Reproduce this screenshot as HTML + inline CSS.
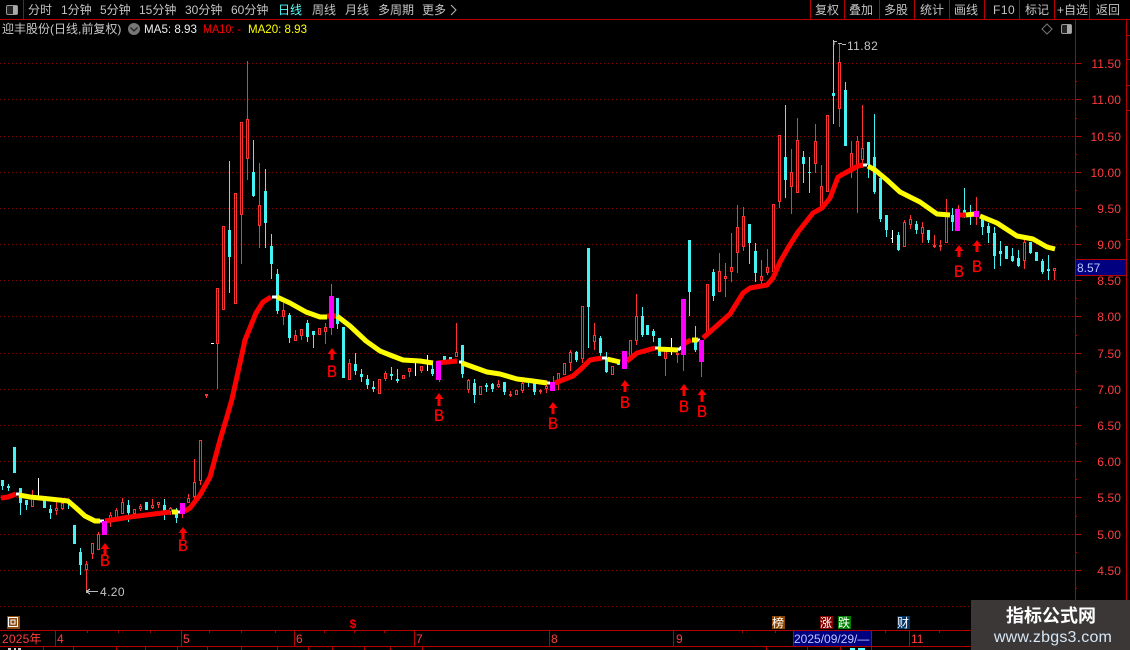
<!DOCTYPE html>
<html><head><meta charset="utf-8"><style>
html,body{margin:0;padding:0;background:#000;width:1130px;height:650px;overflow:hidden}
svg{display:block}
text{font-family:"Liberation Sans","WenQuanYi Zen Hei","Noto Sans CJK SC",sans-serif;font-size:12px}
.n{fill:#c4c4c4}
.p{fill:#ff3c3c;text-anchor:end;letter-spacing:.1px}
.t{fill:#ff3c3c}
.b{fill:#f00;font-size:17px;stroke:#f00;stroke-width:.35px}
</style></head><body>
<svg width="1130" height="650" viewBox="0 0 1130 650" xmlns="http://www.w3.org/2000/svg">
<rect width="1130" height="650" fill="#000"/>
<!-- grid -->
<g stroke="#8a0000" stroke-dasharray="1 3" shape-rendering="crispEdges">
<path d="M0 63.5H1075M0 99.5H1075M0 136.5H1075M0 172.5H1075M0 208.5H1075M0 244.5H1075M0 280.5H1075M0 316.5H1075M0 353.5H1075M0 389.5H1075M0 425.5H1075M0 461.5H1075M0 497.5H1075M0 534.5H1075M0 570.5H1075M0 606.5H1075"/>
</g>
<!-- frame lines -->
<g stroke="#b40000" fill="none" shape-rendering="crispEdges">
<path d="M0 19.5H1130M23.5 0V19M810.5 0V19M844.5 0V19M879.5 0V19M914.5 0V19M949.5 0V19M984.5 0V19M1019.5 0V19M1054.5 0V19M1089.5 0V19"/>
<path d="M1075.5 19V630M1126.5 19V600"/>
<path d="M1075 63.5h6M1075 99.5h6M1075 136.5h6M1075 172.5h6M1075 208.5h6M1075 244.5h6M1075 280.5h6M1075 316.5h6M1075 353.5h6M1075 389.5h6M1075 425.5h6M1075 461.5h6M1075 497.5h6M1075 534.5h6M1075 570.5h6"/>
<path d="M1075 81.5h2M1075 118.5h2M1075 154.5h2M1075 190.5h2M1075 226.5h2M1075 262.5h2M1075 298.5h2M1075 335.5h2M1075 371.5h2M1075 407.5h2M1075 443.5h2M1075 479.5h2M1075 516.5h2M1075 552.5h2M1075 588.5h2"/>
<path d="M1126 35.5h4M1126 59.5h4M1126 85.5h4M1126 110.5h4M1126 239.5h4"/>
<path d="M0 630.5H971M0 646.5H971"/>
<path d="M55.5 630V646M181.5 630V646M294.5 630V646M414.5 630V646M549.5 630V646M673.5 630V646M793.5 630V646M871.5 630V646M909.5 630V646"/>
<path d="M87.5 630v3M118.5 630v3M150.5 630v3M209.5 630v3M241.5 630v3M275.5 630v3M324.5 630v3M354.5 630v3M384.5 630v3M742.5 630v3M775.5 630v3M885.5 630v3M939.5 630v3"/>
<path d="M43.5 646v4M73.5 646v4M116.5 646v4M145.5 646v4M177.5 646v4M207.5 646v4M241.5 646v4M277.5 646v4M308.5 646v4M332.5 646v4M364.5 646v4M390.5 646v4M422.5 646v4M766.5 646v4M807.5 646v4M840.5 646v4M871.5 646v4"/>
</g>
<!-- wicks -->
<g fill="none" stroke-width="1" shape-rendering="crispEdges">
<path stroke="#ff3232" d="M32.5 490V507M56.5 501V515M62.5 500V510M86.5 561V592M92.5 543V559M98.5 532V550M110.5 512V527M116.5 508V518M122.5 498V514M140.5 504V511M152.5 499V509M158.5 502V508M170.5 507V515M188.5 494V503M194.5 459V503M200.5 440V485M206.5 394V398M217.5 288V389M241.5 122V264M247.5 61V180M259.5 163V248M283.5 303V325M295.5 330V341M301.5 329V340M325.5 323V344M349.5 359V380M385.5 371V381M409.5 368V377M421.5 366V373M456.5 323V357M468.5 379V393M498.5 380V388M510.5 391V397M522.5 381V393M540.5 389V394M546.5 384V393M558.5 373V390M570.5 350V371M582.5 306V363M594.5 323V350M636.5 294V345M665.5 351V376M677.5 353V363M719.5 253V292M725.5 263V297M731.5 233V282M737.5 205V273M743.5 207V251M761.5 260V285M767.5 249V275M779.5 135V208M791.5 149V214M797.5 118V193M815.5 124V173M821.5 165V207M839.5 43V127M851.5 141V178M857.5 136V213M862.5 105V168M904.5 220V247M910.5 215V229M922.5 222V243M934.5 235V248M940.5 240V251M946.5 199V243M1024.5 240V269M1054.5 268V280M182.5 503V518M331.5 284V335M439.5 361V382M553.5 376V391M683.5 299V371M701.5 340V377M958.5 205V231M976.5 197V225"/>
<path stroke="#44f4f4" d="M2.5 480V490M8.5 484V491M20.5 488V515M26.5 500V510M50.5 505V519M68.5 503V509M80.5 548V575M128.5 500V522M146.5 502V510M164.5 499V520M176.5 508V523M229.5 161V293M253.5 140V197M265.5 169V248M271.5 234V279M277.5 269V314M289.5 313V343M307.5 320V342M313.5 331V348M337.5 298V329M355.5 353V375M361.5 369V382M367.5 375V389M373.5 381V392M391.5 367V380M397.5 369V383M432.5 363V376M462.5 345V378M474.5 379V403M486.5 383V392M492.5 383V392M504.5 382V395M528.5 382V387M534.5 383V395M576.5 351V362M588.5 248V348M600.5 336V356M606.5 352V373M642.5 307V337M653.5 329V342M689.5 240V316M695.5 326V352M713.5 269V301M749.5 224V264M755.5 243V282M785.5 105V198M803.5 151V183M809.5 157V193M833.5 40V124M845.5 82V146M868.5 142V178M874.5 114V194M880.5 178V222M886.5 215V237M898.5 232V251M916.5 221V234M928.5 230V243M952.5 208V231M964.5 188V218M970.5 205V225M982.5 215V235M988.5 223V243M994.5 227V269M1000.5 241V266M1012.5 248V262M1018.5 250V267M1030.5 242V254M1042.5 259V274M1048.5 255V280"/>
<path stroke="#fff" d="M38.5 478V500M415.5 363V376M427.5 355V371M671.5 338V355M892.5 230V243M211 343.5h3M891 238.5h2"/>
</g>
<!-- red hollow bodies -->
<path fill="#000" stroke="#ff3232" shape-rendering="crispEdges" d="M31.5 497.5h2v9h-2zM55.5 508.5h2v2h-2zM61.5 503.5h2v5h-2zM85.5 564.5h2v5h-2zM91.5 543.5h2v10h-2zM97.5 534.5h2v15h-2zM109.5 515.5h2v6h-2zM115.5 510.5h2v7h-2zM121.5 502.5h2v11h-2zM133.5 509.5h2v4h-2zM139.5 506.5h2v2h-2zM151.5 505.5h2v2h-2zM157.5 502.5h2v2h-2zM169.5 508.5h2v3h-2zM187.5 498.5h2v4h-2zM193.5 482.5h2v14h-2zM199.5 440.5h2v40h-2zM205.5 394.5h2v1h-2zM216.5 288.5h2v55h-2zM222.5 226.5h2v83h-2zM234.5 193.5h2v110h-2zM240.5 122.5h2v92h-2zM246.5 119.5h2v39h-2zM258.5 205.5h2v20h-2zM282.5 310.5h2v6h-2zM294.5 335.5h2v5h-2zM300.5 329.5h2v6h-2zM318.5 328.5h2v6h-2zM324.5 327.5h2v4h-2zM348.5 363.5h2v16h-2zM378.5 379.5h2v14h-2zM384.5 373.5h2v5h-2zM402.5 375.5h2v3h-2zM408.5 368.5h2v3h-2zM420.5 366.5h2v4h-2zM455.5 352.5h2v4h-2zM467.5 380.5h2v9h-2zM479.5 386.5h2v8h-2zM497.5 384.5h2v2h-2zM509.5 394.5h2v1h-2zM515.5 390.5h2v4h-2zM521.5 383.5h2v7h-2zM539.5 390.5h2v1h-2zM545.5 386.5h2v2h-2zM557.5 373.5h2v8h-2zM563.5 363.5h2v11h-2zM569.5 352.5h2v10h-2zM581.5 306.5h2v52h-2zM593.5 335.5h2v6h-2zM611.5 366.5h2v8h-2zM629.5 340.5h2v17h-2zM635.5 316.5h2v24h-2zM664.5 351.5h2v7h-2zM676.5 353.5h2v1h-2zM706.5 284.5h2v48h-2zM718.5 271.5h2v20h-2zM724.5 276.5h2v2h-2zM730.5 267.5h2v4h-2zM736.5 227.5h2v25h-2zM742.5 216.5h2v30h-2zM760.5 276.5h2v4h-2zM766.5 267.5h2v5h-2zM772.5 204.5h2v67h-2zM778.5 135.5h2v66h-2zM790.5 172.5h2v14h-2zM796.5 140.5h2v52h-2zM814.5 141.5h2v22h-2zM820.5 186.5h2v20h-2zM826.5 115.5h2v76h-2zM838.5 62.5h2v46h-2zM850.5 153.5h2v15h-2zM856.5 141.5h2v23h-2zM861.5 148.5h2v11h-2zM903.5 222.5h2v24h-2zM909.5 219.5h2v5h-2zM921.5 227.5h2v6h-2zM933.5 245.5h2v1h-2zM939.5 245.5h2v1h-2zM945.5 215.5h2v27h-2zM1023.5 242.5h2v18h-2zM1053.5 268.5h2v2h-2z"/>
<!-- cyan bodies -->
<path fill="#44f4f4" shape-rendering="crispEdges" d="M1 480h3v6h-3zM7 486h3v2h-3zM13 447h3v26h-3zM19 488h3v15h-3zM25 500h3v5h-3zM43 498h3v10h-3zM49 509h3v4h-3zM73 525h3v19h-3zM79 552h3v13h-3zM127 505h3v8h-3zM145 502h3v8h-3zM163 505h3v6h-3zM175 510h3v8h-3zM228 230h3v27h-3zM252 172h3v24h-3zM264 191h3v32h-3zM270 246h3v18h-3zM276 274h3v37h-3zM288 315h3v23h-3zM306 323h3v14h-3zM312 331h3v4h-3zM336 298h3v26h-3zM342 327h3v51h-3zM354 364h3v7h-3zM360 374h3v3h-3zM366 379h3v6h-3zM372 387h3v2h-3zM390 374h3v2h-3zM396 379h3v2h-3zM431 369h3v5h-3zM443 356h3v6h-3zM449 357h3v4h-3zM461 345h3v29h-3zM473 383h3v12h-3zM485 385h3v2h-3zM491 384h3v5h-3zM503 382h3v10h-3zM533 383h3v9h-3zM575 352h3v8h-3zM587 248h3v59h-3zM599 338h3v15h-3zM605 358h3v14h-3zM617 361h3v4h-3zM641 316h3v19h-3zM646 325h3v10h-3zM652 331h3v5h-3zM658 338h3v18h-3zM688 240h3v52h-3zM694 341h3v9h-3zM712 272h3v24h-3zM748 224h3v19h-3zM754 251h3v22h-3zM784 157h3v23h-3zM802 157h3v7h-3zM808 172h3v1h-3zM832 93h3v3h-3zM844 90h3v56h-3zM867 142h3v23h-3zM873 157h3v35h-3zM879 178h3v41h-3zM885 215h3v15h-3zM897 235h3v15h-3zM915 224h3v6h-3zM927 230h3v10h-3zM951 215h3v7h-3zM963 210h3v3h-3zM969 213h3v2h-3zM981 217h3v10h-3zM987 226h3v7h-3zM993 233h3v23h-3zM999 251h3v3h-3zM1005 246h3v13h-3zM1011 256h3v5h-3zM1017 258h3v8h-3zM1029 242h3v11h-3zM1035 252h3v9h-3zM1041 261h3v11h-3zM1047 269h3v2h-3z"/>
<!-- MA line -->
<g fill="none" stroke-width="5" stroke-linejoin="round">
<path stroke="#f00" d="M1 498L8 497L16 494M105 521L130 517L170 512M185 511L190 508L200 495L210 477L220 440L226 420L232 399L240 363L245 340L256 313L263 302L271 297M327 316L336 316M437 363L457 361M555 383L573 376L582 368L590 360L602 358M627 361L637 353L655 348M685 343L691 340M703 338L730 314L743 293L750 288L767 285L773 278L780 262L788 248L798 232L813 213L822 208L830 198L838 177L845 173L858 166L863 165M955 215L966 215"/>
<path stroke="#ff0" d="M19 495L30 497L50 499L68 501L75 507L85 516L95 521L100 521M172 512L178 512M277 297L290 303L306 312L320 317L327 317M337 316L350 326L366 341L380 351L390 355L403 360L420 361L433 363M462 363L487 372L500 374L517 379L533 381L547 383M607 359L620 362M658 349L678 350M692 340L698 340M868 166L875 170L887 180L900 192L920 202L937 214L950 215M966 215L975 214M980 216L997 223L1017 236L1033 239L1047 247L1055 249"/>
<path stroke="#fff" stroke-width="3" d="M16 494H19M100 521H104M178 512H181M272 297H277M459 362H462M547 383H550M602 358H607M655 348H658M678 350L682 347M698 340H700M863 165H867"/>
</g>
<!-- magenta bodies -->
<path fill="#f0f" shape-rendering="crispEdges" d="M102 521h5v14h-5zM180 503h5v11h-5zM329 296h5v32h-5zM436 361h5v19h-5zM550 382h5v9h-5zM622 351h5v18h-5zM681 299h5v56h-5zM699 340h5v22h-5zM955 209h5v22h-5zM974 211h5v6h-5z"/>
<!-- arrows -->
<path fill="#f00" d="M105 543l4.500 6h-3v6h-3v-6h-3zM183 527l4.500 6h-3v6h-3v-6h-3zM332 348l4.500 6h-3v6h-3v-6h-3zM439 393l4.500 6h-3v7h-3v-7h-3zM553 402l4.500 6h-3v6h-3v-6h-3zM625 380l4.500 6h-3v6h-3v-6h-3zM684 384l4.500 6h-3v6h-3v-6h-3zM702 389l4.500 6h-3v7h-3v-7h-3zM959 245l4.500 6h-3v6h-3v-6h-3zM977 240l4.500 6h-3v6h-3v-6h-3z"/>
<text class="b" x="100" y="566" textLength="10" lengthAdjust="spacingAndGlyphs">B</text>
<text class="b" x="178" y="551" textLength="10" lengthAdjust="spacingAndGlyphs">B</text>
<text class="b" x="327" y="377" textLength="10" lengthAdjust="spacingAndGlyphs">B</text>
<text class="b" x="434" y="421" textLength="10" lengthAdjust="spacingAndGlyphs">B</text>
<text class="b" x="548" y="429" textLength="10" lengthAdjust="spacingAndGlyphs">B</text>
<text class="b" x="620" y="408" textLength="10" lengthAdjust="spacingAndGlyphs">B</text>
<text class="b" x="679" y="412" textLength="10" lengthAdjust="spacingAndGlyphs">B</text>
<text class="b" x="697" y="417" textLength="10" lengthAdjust="spacingAndGlyphs">B</text>
<text class="b" x="954" y="277" textLength="10" lengthAdjust="spacingAndGlyphs">B</text>
<text class="b" x="972" y="272" textLength="10" lengthAdjust="spacingAndGlyphs">B</text>
<!-- hi/lo labels -->
<path d="M834 41.5h3M834 41v4M838 43.5h4M842 44.5h4M87 591.5h11M87 591l3-2M87 592l3 2" stroke="#bbb" fill="none" shape-rendering="crispEdges"/>
<rect x="86" y="590" width="2" height="3" fill="#bbb"/>
<text x="847" y="50" class="n" style="letter-spacing:.4px">11.82</text>
<text x="100" y="596" class="n" style="letter-spacing:.4px">4.20</text>
<!-- nav -->
<rect x="6.5" y="5.5" width="11" height="9" rx="1.5" fill="#222" stroke="#999"/>
<rect x="13" y="6" width="4" height="8" fill="#aaa"/>
<text class="n" x="28" y="14">分时</text>
<text class="n" x="61" y="14">1分钟</text>
<text class="n" x="100" y="14">5分钟</text>
<text class="n" x="139" y="14">15分钟</text>
<text class="n" x="185" y="14">30分钟</text>
<text class="n" x="231" y="14">60分钟</text>
<text x="278" y="14" fill="#5ff">日线</text>
<text class="n" x="312" y="14">周线</text>
<text class="n" x="345" y="14">月线</text>
<text class="n" x="378" y="14">多周期</text>
<text class="n" x="422" y="14">更多</text>
<path d="M451 5l5 5l-5 5" stroke="#bbb" fill="none"/>
<text class="n" x="815" y="14">复权</text>
<text class="n" x="849" y="14">叠加</text>
<text class="n" x="884" y="14">多股</text>
<text class="n" x="920" y="14">统计</text>
<text class="n" x="954" y="14">画线</text>
<text class="n" x="993" y="14" style="letter-spacing:.5px">F10</text>
<text class="n" x="1025" y="14">标记</text>
<text class="n" x="1057" y="14">+自选</text>
<text class="n" x="1096" y="14">返回</text>
<!-- title -->
<text x="2" y="33" fill="#c8c8c8">迎丰股份(日线,前复权)</text>
<circle cx="134" cy="29" r="6" fill="#777"/>
<path d="M130.500 27.500l3.500 3.500l3.500-3.500" stroke="#222" stroke-width="1.300" fill="none"/>
<text x="144" y="33" fill="#eee" textLength="53" lengthAdjust="spacingAndGlyphs">MA5: 8.93</text>
<text x="203" y="33" fill="#f00" textLength="38" lengthAdjust="spacingAndGlyphs">MA10: -</text>
<text x="248" y="33" fill="#ff0" textLength="59" lengthAdjust="spacingAndGlyphs">MA20: 8.93</text>
<path d="M1047 24l5 5l-5 5l-5-5z" stroke="#777" fill="none"/>
<rect x="1061.500" y="24.500" width="10" height="9" rx="1.500" fill="#222" stroke="#999"/>
<rect x="1067" y="25" width="4" height="8" fill="#aaa"/>
<!-- price axis -->
<text class="p" x="1121" y="68">11.50</text>
<text class="p" x="1121" y="104">11.00</text>
<text class="p" x="1121" y="141">10.50</text>
<text class="p" x="1121" y="177">10.00</text>
<text class="p" x="1121" y="213">9.50</text>
<text class="p" x="1121" y="249">9.00</text>
<text class="p" x="1121" y="285">8.50</text>
<text class="p" x="1121" y="321">8.00</text>
<text class="p" x="1121" y="358">7.50</text>
<text class="p" x="1121" y="394">7.00</text>
<text class="p" x="1121" y="430">6.50</text>
<text class="p" x="1121" y="466">6.00</text>
<text class="p" x="1121" y="502">5.50</text>
<text class="p" x="1121" y="539">5.00</text>
<text class="p" x="1121" y="575">4.50</text>
<rect x="1075.500" y="259.500" width="51" height="16" fill="#000080" stroke="#b40000" shape-rendering="crispEdges"/>
<text x="1077" y="272" fill="#b8c8ff">8.57</text>
<!-- event badges -->
<rect x="7" y="616" width="13" height="13" fill="#8b4a12"/>
<rect x="8.500" y="617.500" width="9" height="9" fill="none" stroke="#fff"/>
<rect x="11" y="620" width="4" height="4" fill="none" stroke="#fff" shape-rendering="crispEdges"/>
<text x="353" y="628" fill="#f00" text-anchor="middle" font-weight="bold">$</text>
<rect x="772" y="616" width="13" height="13" fill="#8b4500"/>
<text x="772" y="627" fill="#fff">榜</text>
<rect x="820" y="616" width="13" height="13" fill="#800000"/>
<text x="820" y="627" fill="#fff">涨</text>
<rect x="838" y="616" width="13" height="13" fill="#008000"/>
<text x="838" y="627" fill="#fff">跌</text>
<rect x="897" y="616" width="13" height="13" fill="#003366"/>
<text x="897" y="627" fill="#fff">财</text>
<!-- time axis -->
<text class="t" x="2" y="643" style="letter-spacing:.2px">2025年</text>
<text class="t" x="57" y="643">4</text>
<text class="t" x="183" y="643">5</text>
<text class="t" x="296" y="643">6</text>
<text class="t" x="416" y="643">7</text>
<text class="t" x="551" y="643">8</text>
<text class="t" x="676" y="643">9</text>
<text class="t" x="911" y="643">11</text>
<rect x="794" y="631" width="77" height="15" fill="#000080"/>
<text x="794" y="643" fill="#b8c8ff">2025/09/29/—</text>
<path d="M8 648h3v2h-3zM14 648h2v2h-2zM18 648h3v2h-3z" fill="#ccc"/>
<path d="M850 648h5v2h-5zM858 648h7v2h-7z" fill="#5ff"/>
<!-- watermark -->
<rect x="971" y="600" width="159" height="50" fill="#3b3737"/>
<text x="1051" y="622" fill="#fff" text-anchor="middle" style="font-size:18px;font-weight:bold;font-family:'Noto Sans CJK SC',sans-serif">指标公式网</text>
<text x="1053" y="642" fill="#d6e6f4" text-anchor="middle" style="font-size:16px;letter-spacing:.2px">www.zbgs3.com</text>
</svg>
</body></html>
